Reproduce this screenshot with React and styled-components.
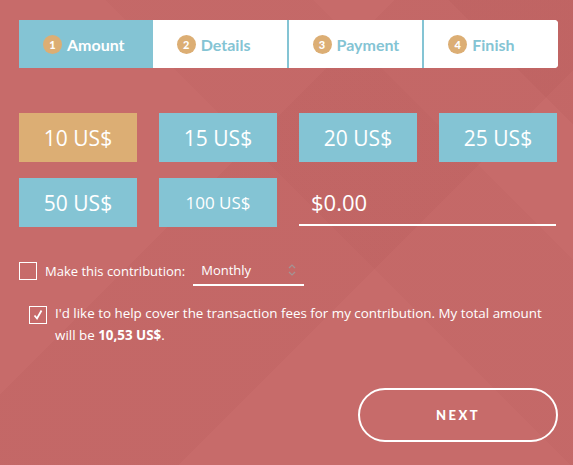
import React, { useState } from 'react';
import styled, { createGlobalStyle } from 'styled-components';

const GlobalStyle = createGlobalStyle`
html, body {
margin: 0;
padding: 0;
}
body {
width: 573px;
height: 465px;
overflow: hidden;
font-family: "Open Sans", "Liberation Sans", sans-serif;
}
`

const steps = ['Amount', 'Details', 'Payment', 'Finish'];
const amounts = [10, 15, 20, 25, 50, 100];

const App = () => {
    const [selected, setSelected] = useState(10);
    const [recurring, setRecurring] = useState(false);
    const [coverFees, setCoverFees] = useState(true);

    return (
        <Page>
            <GlobalStyle />
            <Steps>
                {steps.map((step, i) => (
                    <Step key={step} active={i === 0} divider={i > 1}>
                        <StepNum>{i + 1}</StepNum>
                        {step}
                    </Step>
                ))}
            </Steps>

            <AmountGrid>
                {amounts.map(a => (
                    <AmountButton key={a} active={a === selected} small={a >= 100} onClick={() => setSelected(a)}>
                        {a} US$
                    </AmountButton>
                ))}
                <CustomInput placeholder="$0.00" />
            </AmountGrid>

            <RecurringRow>
                <Box checked={recurring} onClick={() => setRecurring(!recurring)} />
                <Label>Make this contribution:</Label>
                <SelectWrap>
                    Monthly
                    <svg width="8" height="14" viewBox="0 0 8 14">
                        <path d="M1 5 L4 2 L7 5 M1 9 L4 12 L7 9" fill="none" stroke="#a39494" strokeWidth="1.2" />
                    </svg>
                </SelectWrap>
            </RecurringRow>

            <FeeRow>
                <Box checked={coverFees} onClick={() => setCoverFees(!coverFees)}>
                    {coverFees && (
                        <svg width="12" height="12" viewBox="0 0 12 12">
                            <path d="M2.5 6.5 L5 9.5 L9.5 1.5" fill="none" stroke="white" strokeWidth="1.8" />
                        </svg>
                    )}
                </Box>
                <FeeText>
                    I'd like to help cover the transaction fees for my contribution. My total amount will be <Total>10,53 US$</Total>.
                </FeeText>
            </FeeRow>

            <Footer>
                <NextButton>NEXT</NextButton>
            </Footer>
        </Page>
    )
}

const Page = styled.div`
width: 573px;
height: 465px;
box-sizing: border-box;
padding: 20px 15px 0 19px;
color: white;
background-color: #c76b6a;
background-image:
    linear-gradient(135deg, transparent 0%, transparent 38%, rgba(150, 60, 60, 0.07) 38%, rgba(150, 60, 60, 0.07) 62%, transparent 62%),
    linear-gradient(45deg, transparent 0%, transparent 55%, rgba(150, 60, 60, 0.05) 55%, rgba(150, 60, 60, 0.05) 75%, transparent 75%),
    linear-gradient(225deg, rgba(150, 60, 60, 0.08) 0%, rgba(150, 60, 60, 0.08) 12%, transparent 12%);
`

const Steps = styled.div`
display: flex;
width: 539px;
height: 48px;
background: white;
border-radius: 0 4px 4px 0;
overflow: hidden;
`

const Step = styled.div`
flex: 1;
display: flex;
align-items: center;
gap: 5px;
padding-left: 24px;
box-sizing: border-box;
background: ${props => props.active ? '#84c4d4' : 'white'};
color: ${props => props.active ? 'white' : '#84c4d4'};
border-left: ${props => props.divider ? '2px solid #84c4d4' : 'none'};
font-family: Lato, "Open Sans", sans-serif;
font-weight: 700;
font-size: 16px;
`

const StepNum = styled.span`
width: 19px;
height: 19px;
border-radius: 50%;
background: #dcae74;
color: white;
font-size: 11px;
font-weight: 900;
display: flex;
align-items: center;
justify-content: center;
`

const AmountGrid = styled.div`
display: grid;
grid-template-columns: repeat(4, 118px);
grid-auto-rows: 49px;
column-gap: 22px;
row-gap: 16px;
margin-top: 45px;
`

const AmountButton = styled.button`
border: none;
margin: 0;
padding: 0;
background: ${props => props.active ? '#dcae74' : '#84c4d4'};
color: white;
font-family: "Open Sans", sans-serif;
font-size: ${props => props.small ? '17px' : '21px'};
cursor: pointer;
`

const CustomInput = styled.input`
grid-column: 3 / 5;
background: transparent;
border: none;
border-bottom: 2px solid white;
margin: 0 1px 1px 0;
padding: 2px 0 0 12px;
color: white;
font-family: "Open Sans", sans-serif;
font-size: 22px;
outline: none;
&::placeholder {
    color: white;
    opacity: 1;
}
`

const RecurringRow = styled.div`
display: flex;
align-items: center;
margin-top: 29px;
height: 30px;
`

const Box = styled.span`
width: 16px;
height: 16px;
border: 1px solid white;
flex-shrink: 0;
display: flex;
align-items: center;
justify-content: center;
cursor: pointer;
`

const Label = styled.span`
font-size: 13px;
margin-left: 8px;
`

const SelectWrap = styled.div`
display: flex;
align-items: center;
justify-content: space-between;
box-sizing: border-box;
width: 111px;
height: 30px;
margin-left: 8px;
padding: 0 8px 0 8px;
border-bottom: 2px solid white;
font-size: 13px;
`

const FeeRow = styled.div`
display: flex;
align-items: flex-start;
gap: 8px;
margin-top: 20px;
padding-left: 10px;
`

const FeeText = styled.p`
margin: -4px 0 0;
width: 490px;
font-size: 13.4px;
line-height: 22px;
`

const Total = styled.strong`
font-weight: 700;
`

const Footer = styled.div`
display: flex;
justify-content: flex-end;
margin-top: 42px;
width: 539px;
`

const NextButton = styled.button`
width: 200px;
height: 54px;
border: 2px solid white;
border-radius: 27px;
background: transparent;
color: white;
font-family: Lato, sans-serif;
font-weight: 900;
font-size: 13px;
letter-spacing: 2.5px;
cursor: pointer;
`

export default App
